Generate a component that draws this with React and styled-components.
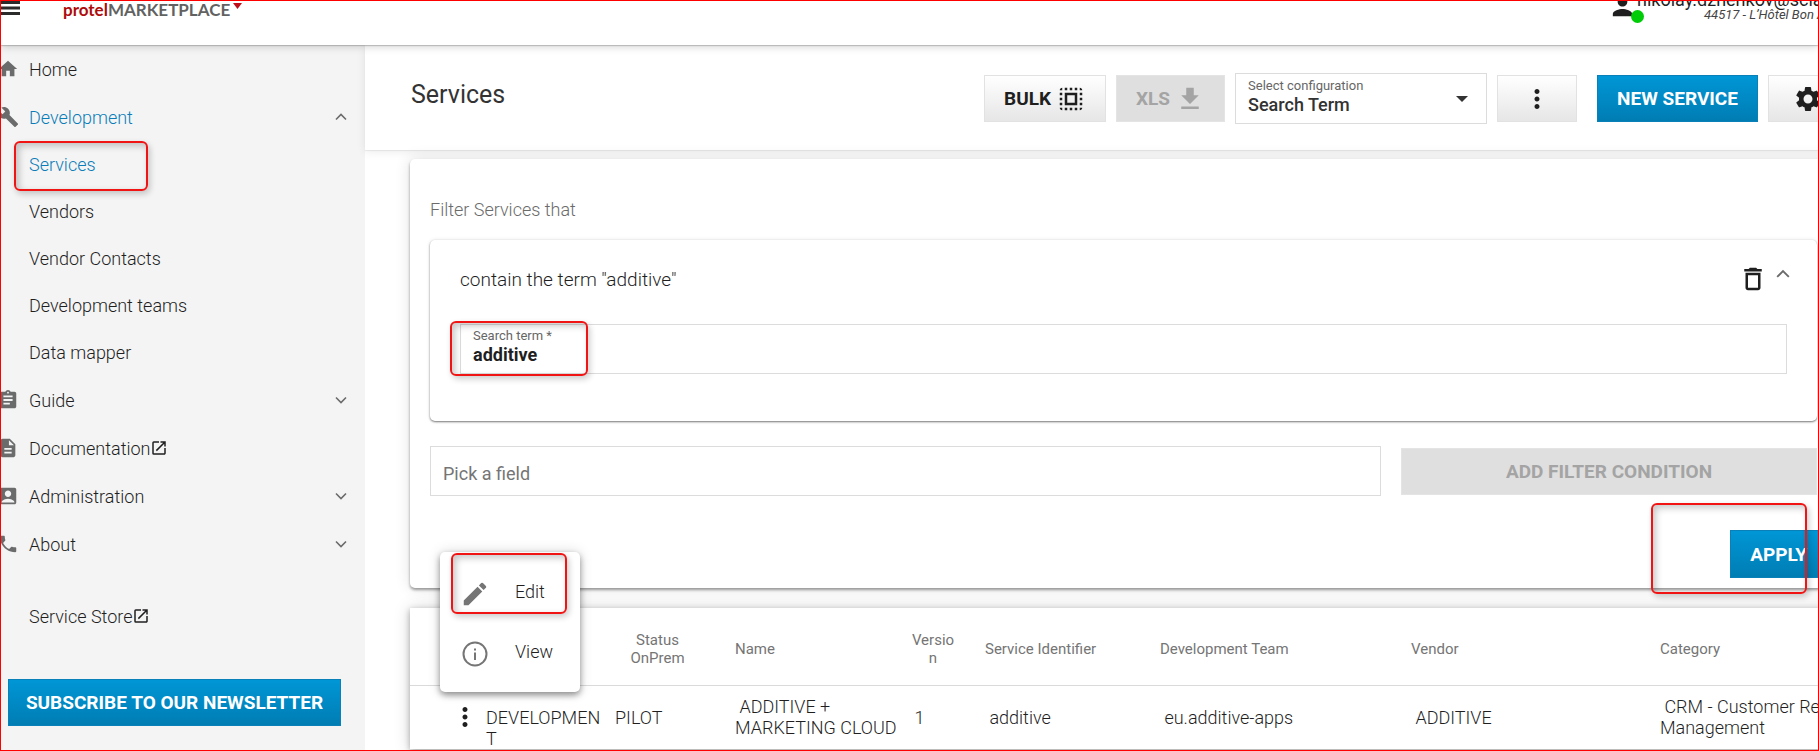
import React from "react";
import styled, { createGlobalStyle, css } from "styled-components";
import {
  MdHome,
  MdBuild,
  MdAssignment,
  MdDescription,
  MdAccountBox,
  MdPhone,
  MdOpenInNew,
  MdSelectAll,
  MdGetApp,
  MdMoreVert,
  MdSettings,
  MdDeleteOutline,
  MdEdit,
  MdPerson,
} from "react-icons/md";

const GlobalStyle = createGlobalStyle`
  *, *::before, *::after { box-sizing: border-box; }
  body {
    margin: 0;
    font-family: Roboto, "Liberation Sans", sans-serif;
    font-size: 18px;
    font-weight: 300;
    color: #1f1f1f;
    background: #fff;
  }
  button, input, select { font-family: inherit; font-size: inherit; color: inherit; margin: 0; }
`;

const Frame = styled.div`
  position: relative;
  display: flex;
  flex-direction: column;
  height: 100vh;
  border: 1px solid #f00;
  overflow: hidden;
`;

/* ---------- header ---------- */

const Header = styled.header`
  position: relative;
  z-index: 3;
  display: flex;
  flex-shrink: 0;
  align-items: flex-end;
  height: 44px;
  padding-bottom: 23px;
  background: #fff;
  box-shadow: 0 1px 1px rgba(0, 0, 0, 0.18), 0 2px 8px rgba(0, 0, 0, 0.16);
`;

const MenuButton = styled.button`
  display: flex;
  flex-shrink: 0;
  width: 62px;
  padding: 0 0 7px;
  border: 0;
  background: none;
`;

const Logo = styled.a`
  display: flex;
  flex-shrink: 0;
  align-items: flex-end;
  font-family: Lato, "Open Sans", sans-serif;
  font-size: 17px;
  line-height: 24px;
  font-weight: 700;
  color: #626262;
  text-decoration: none;

  span { color: #ae0c0c; }
  svg { align-self: flex-start; margin: 5px 0 0 3px; }
`;

const User = styled.div`
  display: flex;
  flex-shrink: 0;
  align-items: flex-end;
  width: 210px;
  height: 44px;
  margin-left: auto;
  white-space: nowrap;
  font-weight: 400;
`;

const Avatar = styled.div`
  position: relative;
  display: flex;
  width: 30px;
  margin-bottom: 1px;
`;

const OnlineDot = styled.i`
  position: absolute;
  right: -7px;
  bottom: -2px;
  width: 13px;
  height: 13px;
  border-radius: 50%;
  background: #00cc07;
`;

const UserText = styled.div`
  display: flex;
  flex-direction: column;
  line-height: 14px;
`;

const Hotel = styled.em`
  padding-left: 67px;
  font-size: 13px;
  line-height: 15px;
  color: #444;
`;

/* ---------- sidebar ---------- */

const Body = styled.div`
  display: flex;
  flex: 1;
  min-height: 0;
`;

const Sidebar = styled.aside`
  flex: 0 0 364px;
  background: #f4f4f4;
`;

const NavList = styled.ul`
  margin: 0 18px 0 -4px;
  padding: 0;
  list-style: none;
`;

const NavItem = styled.li`
  position: relative;
  display: flex;
  align-items: center;
  height: ${(p) => (p.$sub ? 47 : 48)}px;
  margin-top: ${(p) => (p.$apart ? 24 : 0)}px;
`;

const NavIcon = styled.span`
  display: flex;
  width: 32px;
  color: #6b6b6b;
`;

const NavLink = styled.a`
  display: flex;
  flex: 1;
  align-items: center;
  color: ${(p) => (p.$active ? "#0a7db8" : "#1f1f1f")};
  font-weight: 300;
  text-decoration: none;
`;

/* ---------- shared controls ---------- */

const tones = {
  primary: css`
    border-color: #0a80b8;
    background: linear-gradient(#0096d6, #007db3);
    color: #fff;
  `,
  plain: css`
    border-color: #e2e2e2;
    background: linear-gradient(#fff, #e6e6e6);
    color: #1f1f1f;
  `,
  disabled: css`
    border-color: #e4e4e4;
    background: #dfdfdf;
    color: #a4a4a4;
  `,
};

const Button = styled.button`
  display: flex;
  flex-shrink: 0;
  align-items: center;
  justify-content: center;
  gap: 5px;
  height: 47px;
  min-width: ${(p) => (p.$icon ? "80px" : "0")};
  padding: 0 19px;
  border: 1px solid;
  font-size: 19px;
  font-weight: 700;
  white-space: nowrap;
  ${(p) => tones[p.$tone]}
`;

const Subscribe = styled(Button)`
  width: 333px;
  margin: 39px 0 0 7px;
`;

const FieldBox = styled.div`
  position: relative;
  display: flex;
  flex-direction: column;
  justify-content: center;
  height: 50px;
  flex: ${(p) => p.$flex || "none"};
  padding: ${(p) => (p.$unlabelled ? "6px 12px 0" : "0 12px 4px")};
  border: 1px solid #dcdcdc;
  background: #fff;
`;

const FieldLabel = styled.label`
  font-size: 13px;
  line-height: 16px;
  font-weight: 400;
  color: #666;
`;

const fieldText = css`
  width: 100%;
  padding: 0;
  border: 0;
  outline: 0;
  background: none;
  line-height: 22px;
`;

const TextInput = styled.input`
  ${fieldText}
  height: 22px;
  font-weight: ${(p) => (p.$strong ? 700 : 400)};
  &::placeholder { color: #757575; opacity: 1; }
`;

const Select = styled.select`
  ${fieldText}
  height: 22px;
  appearance: none;
  font-weight: 500;
  color: #333;
`;

const Caret = styled.svg`
  position: absolute;
  right: 18px;
  top: 22px;
  pointer-events: none;
`;

const Highlight = styled.i`
  position: absolute;
  z-index: 5;
  top: ${(p) => p.$top}px;
  left: ${(p) => p.$left}px;
  width: ${(p) => p.$w}px;
  height: ${(p) => p.$h}px;
  border: 2px solid #f01414;
  border-radius: 6px;
  box-shadow: 2px 3px 6px rgba(0, 0, 0, 0.2), inset 3px 3px 7px rgba(0, 0, 0, 0.22);
  pointer-events: none;
`;

/* ---------- main ---------- */

const Main = styled.main`
  display: flex;
  flex: 1;
  flex-direction: column;
  min-width: 0;
  margin-right: -30px;
`;

const Toolbar = styled.div`
  position: relative;
  display: flex;
  flex-shrink: 0;
  align-items: center;
  gap: 10px;
  height: 105px;
  padding: 2px 0 0 46px;
  background: #fff;
  box-shadow: 0 1px 1px rgba(0, 0, 0, 0.06), 0 2px 9px rgba(0, 0, 0, 0.08);
`;

const Title = styled.h1`
  flex: 1;
  margin: 0 0 8px;
  font-size: 25px;
  line-height: 32px;
  font-weight: 400;
  color: #333;
`;

const ConfigBox = styled(FieldBox)`
  width: 252px;
  height: 51px;
`;

const NewService = styled(Button)`
  margin-left: 10px;
`;

const Cards = styled.div`
  display: flex;
  flex-direction: column;
  gap: 20px;
  padding: 9px 11px 0 45px;
`;

const FilterCard = styled.section`
  position: relative;
  padding: 39px 10px 10px;
  border-radius: 5px;
  background: #fff;
  box-shadow: 0 2px 3px rgba(0, 0, 0, 0.38), 0 0 16px rgba(0, 0, 0, 0.12);
`;

const FilterTitle = styled.h2`
  margin: 0 10px 18px;
  font-size: 18px;
  line-height: 24px;
  font-weight: 300;
  color: #6b6b6b;
`;

const Condition = styled.div`
  margin: 0 10px 25px;
  padding: 27px 30px 47px;
  border-radius: 5px;
  box-shadow: 0 1px 2px rgba(0, 0, 0, 0.5), 0 0 4px rgba(0, 0, 0, 0.1);
`;

const ConditionHead = styled.div`
  display: flex;
  align-items: center;
  gap: 8px;
  height: 24px;
  margin: 0 -3px 33px 0;

  p { flex: 1; margin: 0; font-size: 19px; }
`;

const IconButton = styled.button`
  display: flex;
  align-self: ${(p) => (p.$raised ? "flex-start" : "center")};
  padding: 0;
  border: 0;
  background: none;
`;

const PickRow = styled.div`
  display: flex;
  align-items: center;
  gap: 20px;
  margin: 0 10px 34px;
`;

const AddCondition = styled(Button)`
  width: 416px;
`;

const Actions = styled.div`
  display: flex;
  justify-content: flex-end;
`;

const ApplyWrap = styled.div`
  position: relative;
`;

const Apply = styled(Button)`
  height: 48px;
`;

/* ---------- table ---------- */

const TableCard = styled.section`
  position: relative;
  z-index: 1;
  min-width: 1510px;
  background: #fff;
  box-shadow: 0 2px 6px rgba(0, 0, 0, 0.3), 0 0 16px rgba(0, 0, 0, 0.16);
`;

const Table = styled.table`
  width: 100%;
  table-layout: fixed;
  border-collapse: collapse;
`;

const Th = styled.th`
  height: 77px;
  padding: 5px 5px 0;
  border-bottom: 1px solid #dadada;
  font-size: 15px;
  line-height: 18px;
  font-weight: 400;
  text-align: left;
  color: #757575;
`;

const NarrowHead = styled.span`
  display: block;
  width: ${(p) => p.$w}px;
  text-align: center;
  overflow-wrap: anywhere;
`;

const Td = styled.td`
  height: 63px;
  padding: ${(p) => (p.$top ? "21px 5px 0" : "0 5px")};
  line-height: 21px;
  vertical-align: ${(p) => (p.$top ? "top" : "middle")};
  overflow-wrap: anywhere;
`;

const RowMenuButton = styled(IconButton)`
  margin-left: 35px;
`;

const RowMenu = styled.div`
  position: absolute;
  z-index: 4;
  top: -56px;
  left: 30px;
  width: 140px;
  padding: 9px 0 11px;
  border-radius: 5px;
  background: #fff;
  box-shadow: 0 3px 6px rgba(0, 0, 0, 0.4), 0 0 14px rgba(0, 0, 0, 0.14);
`;

const RowMenuItem = styled.button`
  display: flex;
  align-items: center;
  gap: 25px;
  width: 100%;
  height: 60px;
  padding: 0 20px;
  border: 0;
  background: none;
  font-weight: 300;

  svg { margin-top: 5px; color: #757575; }
`;

/* ---------- icons ---------- */

const Chevron = ({ up, size = 12 }) => (
  <svg width={size} height={size} viewBox="0 0 12 12" fill="none" stroke="#6b6b6b" strokeWidth="1.6">
    <path d={up ? "M1 8.5 6 3.5l5 5" : "M1 3.5l5 5 5-5"} />
  </svg>
);

const InfoIcon = () => (
  <svg width="30" height="30" viewBox="0 0 30 30" fill="none" stroke="currentColor" strokeWidth="2">
    <circle cx="15" cy="15" r="11.5" />
    <path d="M15 13.5V21M15 9.5v2" />
  </svg>
);

const NAV = [
  { label: "Home", Icon: MdHome },
  { label: "Development", Icon: MdBuild, active: true, open: true },
  { label: "Services", sub: true, active: true, marked: true },
  { label: "Vendors", sub: true },
  { label: "Vendor Contacts", sub: true },
  { label: "Development teams", sub: true },
  { label: "Data mapper", sub: true },
  { label: "Guide", Icon: MdAssignment, closed: true },
  { label: "Documentation", Icon: MdDescription, external: true },
  { label: "Administration", Icon: MdAccountBox, closed: true },
  { label: "About", Icon: MdPhone, closed: true },
  { label: "Service Store", external: true, apart: true },
];

const COLUMN_WIDTHS = [71, 129, 120, 175, 75, 175, 251, 249];

export default function App() {
  return (
    <>
      <GlobalStyle />
      <Frame>
        <Header>
          <MenuButton aria-label="Menu">
            <svg width="19" height="14" viewBox="0 0 19 14" fill="#2b2b2b">
              <path d="M0 0h19v3H0zM0 5.500h19v3H0zM0 11h19v3H0z" />
            </svg>
          </MenuButton>
          <Logo href="#">
            <span>protel</span>MARKETPLACE
            <svg width="9" height="6" viewBox="0 0 9 6">
              <path d="M0 0h9L4.500 6z" fill="#c00d1a" />
            </svg>
          </Logo>
          <User>
            <Avatar>
              <MdPerson size={29} />
              <OnlineDot />
            </Avatar>
            <UserText>
              <span>nikolay.dzhenkov@scia</span>
              <Hotel>44517 - L’Hôtel Bon A</Hotel>
            </UserText>
          </User>
        </Header>

        <Body>
          <Sidebar>
            <nav>
              <NavList>
                {NAV.map(({ label, Icon, sub, active, open, closed, external, apart, marked }) => (
                  <NavItem key={label} $sub={sub} $apart={apart}>
                    <NavIcon>{Icon && <Icon size={22} />}</NavIcon>
                    <NavLink href="#" $active={active}>
                      {label}
                      {external && <MdOpenInNew size={18} />}
                    </NavLink>
                    {(open || closed) && <Chevron up={open} />}
                    {marked && <Highlight $top={0} $left={17} $w={134} $h={50} />}
                  </NavItem>
                ))}
              </NavList>
            </nav>
            <Subscribe $tone="primary">SUBSCRIBE TO OUR NEWSLETTER</Subscribe>
          </Sidebar>

          <Main>
            <Toolbar>
              <Title>Services</Title>
              <Button $tone="plain">
                BULK <MdSelectAll size={30} />
              </Button>
              <Button $tone="disabled" disabled>
                XLS <MdGetApp size={30} />
              </Button>
              <ConfigBox>
                <FieldLabel htmlFor="config">Select configuration</FieldLabel>
                <Select id="config">
                  <option>Search Term</option>
                </Select>
                <Caret width="12" height="6" viewBox="0 0 12 6">
                  <path d="M0 0h12L6 6z" fill="#333" />
                </Caret>
              </ConfigBox>
              <Button $tone="plain" $icon aria-label="More">
                <MdMoreVert size={30} />
              </Button>
              <NewService $tone="primary">NEW SERVICE</NewService>
              <Button $tone="plain" $icon aria-label="Settings">
                <MdSettings size={30} />
              </Button>
            </Toolbar>

            <Cards>
              <FilterCard>
                <FilterTitle>Filter Services that</FilterTitle>
                <Condition>
                  <ConditionHead>
                    <p>contain the term "additive"</p>
                    <IconButton aria-label="Delete condition">
                      <MdDeleteOutline size={30} />
                    </IconButton>
                    <IconButton $raised aria-label="Collapse">
                      <Chevron up size={14} />
                    </IconButton>
                  </ConditionHead>
                  <FieldBox>
                    <FieldLabel htmlFor="term">Search term *</FieldLabel>
                    <TextInput id="term" $strong defaultValue="additive" />
                    <Highlight $top={-4} $left={-11} $w={138} $h={55} />
                  </FieldBox>
                </Condition>
                <PickRow>
                  <FieldBox $flex="1" $unlabelled>
                    <TextInput aria-label="Pick a field" placeholder="Pick a field" />
                  </FieldBox>
                  <AddCondition $tone="disabled" disabled>
                    ADD FILTER CONDITION
                  </AddCondition>
                </PickRow>
                <Actions>
                  <ApplyWrap>
                    <Apply $tone="primary">APPLY</Apply>
                    <Highlight $top={-27} $left={-79} $w={156} $h={91} />
                  </ApplyWrap>
                </Actions>
              </FilterCard>

              <TableCard>
                <Table>
                  <colgroup>
                    {COLUMN_WIDTHS.map((w, i) => (
                      <col key={i} width={w} />
                    ))}
                    <col />
                  </colgroup>
                  <thead>
                    <tr>
                      <Th />
                      <Th />
                      <Th>
                        <NarrowHead $w={85}>Status OnPrem</NarrowHead>
                      </Th>
                      <Th>Name</Th>
                      <Th>
                        <NarrowHead $w={46}>Version</NarrowHead>
                      </Th>
                      <Th>Service Identifier</Th>
                      <Th>Development Team</Th>
                      <Th>Vendor</Th>
                      <Th>Category</Th>
                    </tr>
                  </thead>
                  <tbody>
                    <tr>
                      <Td>
                        <RowMenuButton aria-label="Row actions">
                          <MdMoreVert size={30} />
                        </RowMenuButton>
                      </Td>
                      <Td $top>DEVELOPMENT</Td>
                      <Td>PILOT</Td>
                      <Td>&nbsp;ADDITIVE + MARKETING CLOUD</Td>
                      <Td>&nbsp;1</Td>
                      <Td>&nbsp;additive</Td>
                      <Td>&nbsp;eu.additive-apps</Td>
                      <Td>&nbsp;ADDITIVE</Td>
                      <Td>&nbsp;CRM - Customer Relationship Management</Td>
                    </tr>
                  </tbody>
                </Table>
                <RowMenu>
                  <RowMenuItem>
                    <MdEdit size={30} /> Edit
                  </RowMenuItem>
                  <RowMenuItem>
                    <InfoIcon /> View
                  </RowMenuItem>
                  <Highlight $top={1} $left={11} $w={116} $h={61} />
                </RowMenu>
              </TableCard>
            </Cards>
          </Main>
        </Body>
      </Frame>
    </>
  );
}
